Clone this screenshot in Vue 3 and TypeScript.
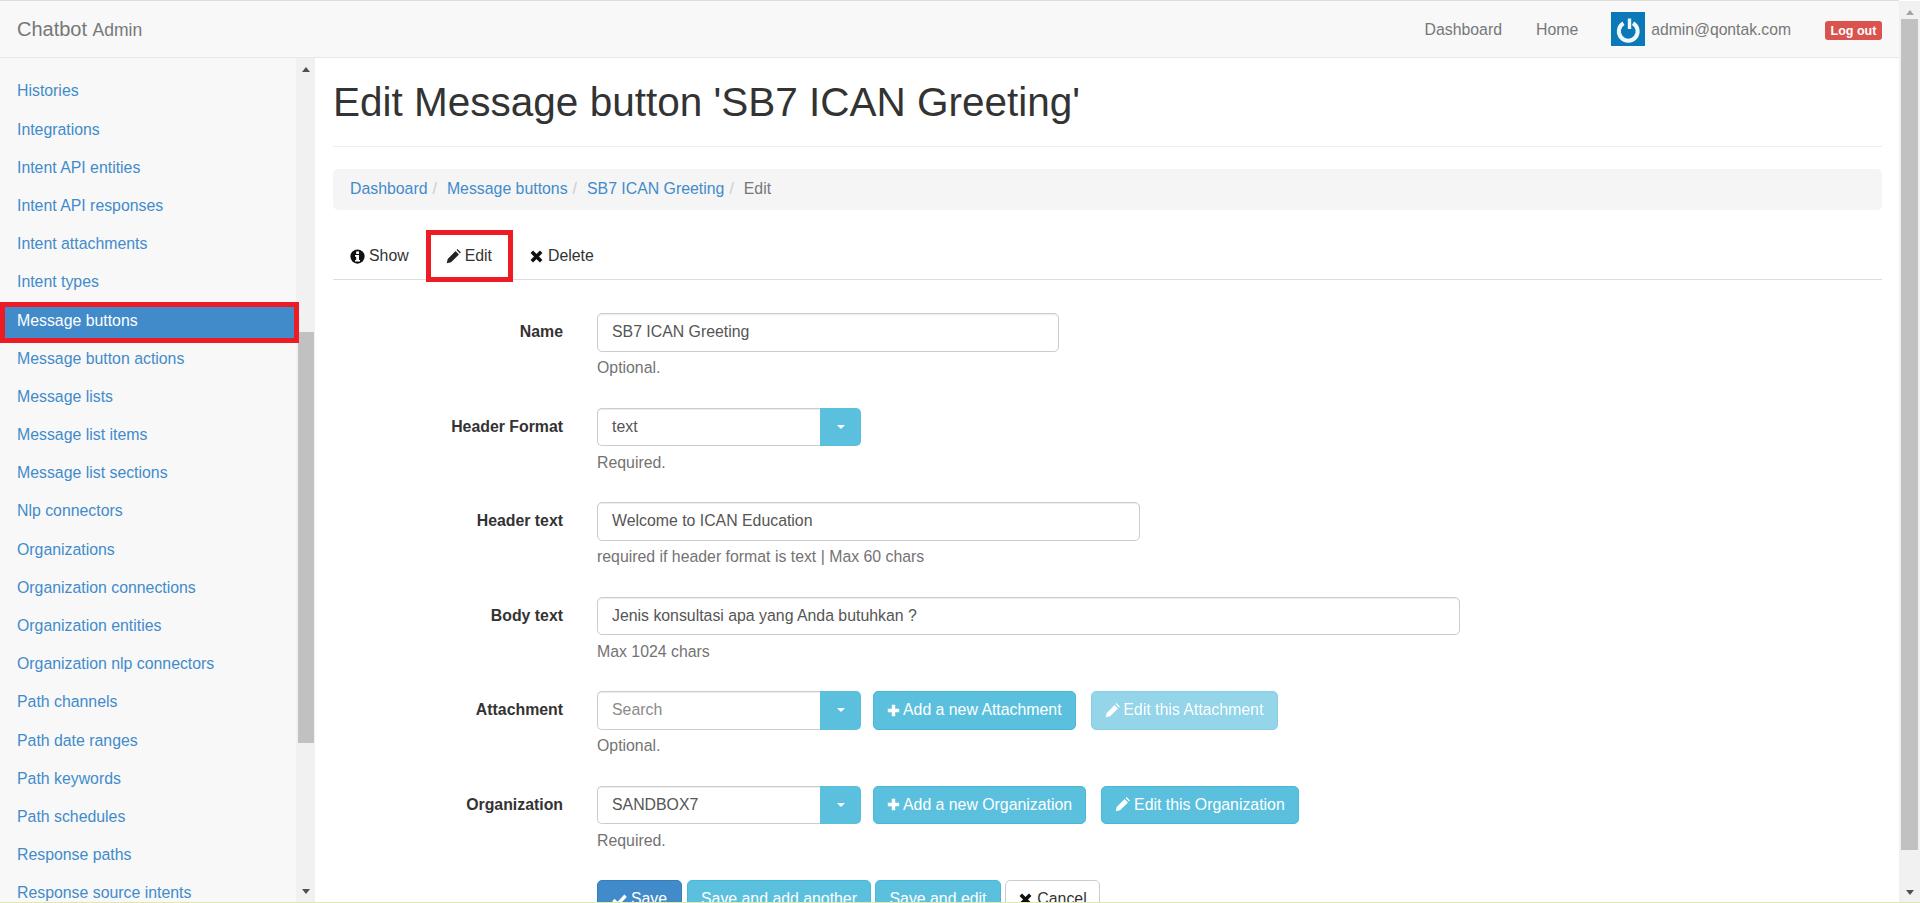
<script setup lang="ts">
const sideItems: string[] = [
  'Histories', 'Integrations', 'Intent API entities', 'Intent API responses', 'Intent attachments',
  'Intent types', 'Message buttons', 'Message button actions', 'Message lists', 'Message list items',
  'Message list sections', 'Nlp connectors', 'Organizations', 'Organization connections',
  'Organization entities', 'Organization nlp connectors', 'Path channels', 'Path date ranges',
  'Path keywords', 'Path schedules', 'Response paths', 'Response source intents',
]
</script>

<template>
  <div class="page">
    <header class="nav">
      <div class="brand">Chatbot <small>Admin</small></div>
      <div class="nav-right">
        <a class="nav-link dash">Dashboard</a>
        <a class="nav-link home">Home</a>
        <svg class="avatar" viewBox="0 0 34 34" aria-hidden="true">
          <rect width="34" height="34" fill="#0b78b8" />
          <path d="M12.5 11.2a9.4 9.4 0 1 0 9.5 0" fill="none" stroke="#eef6fa" stroke-width="4" />
          <path d="M18.5 6.5v10.5" stroke="#eef6fa" stroke-width="3.4" />
        </svg>
        <span class="email">admin@qontak.com</span>
        <span class="logout">Log out</span>
      </div>
    </header>

    <div class="body">
      <aside class="side">
        <ul class="side-list">
          <li v-for="item in sideItems" :key="item" class="side-item" :class="{ active: item === 'Message buttons' }">
            {{ item }}
          </li>
        </ul>
        <div class="scroll side-scroll">
          <i class="arr up"></i>
          <div class="thumb side-thumb"></div>
          <i class="arr down"></i>
        </div>
        <div class="mark side-mark"></div>
      </aside>

      <main class="main">
        <h1 class="title">Edit Message button 'SB7 ICAN Greeting'</h1>
        <hr class="rule" />
        <nav class="crumbs">
          <a>Dashboard</a><span class="sep">/</span>
          <a>Message buttons</a><span class="sep">/</span>
          <a>SB7 ICAN Greeting</a><span class="sep">/</span>
          <span class="cur">Edit</span>
        </nav>
        <div class="tabs">
          <span class="tab show">
            <svg class="ico" viewBox="0 0 16 16"><circle cx="8" cy="8" r="7.6" fill="#111" /><rect x="6.6" y="2.6" width="3" height="2.7" fill="#fff" /><path d="M5.4 6.5h4.2v5.2h1.1v1.7H5.4v-1.7h1.2V8.2H5.4z" fill="#fff" /></svg>Show
          </span>
          <span class="tab edit">
            <svg class="ico" viewBox="0 0 16 16"><path d="M0.8 15.2l1-4.6L10.2 2.2l3.6 3.6-8.4 8.4zM11.3 1.1l1-1 3.6 3.6-1 1z" fill="#222" /></svg>Edit
            <span class="mark tab-mark"></span>
          </span>
          <span class="tab del">
            <svg class="ico" viewBox="0 0 16 16"><path d="M3 3l10 10M13 3L3 13" stroke="#111" stroke-width="3.8" fill="none" /></svg>Delete
          </span>
        </div>

        <form class="form">
          <div class="row">
            <label>Name</label>
            <div class="ctl">
              <div class="input w-name">SB7 ICAN Greeting</div>
              <p class="help">Optional.</p>
            </div>
          </div>
          <div class="row">
            <label>Header Format</label>
            <div class="ctl">
              <div class="line">
                <div class="input combo">text</div><span class="caret-btn"><i></i></span>
              </div>
              <p class="help">Required.</p>
            </div>
          </div>
          <div class="row">
            <label>Header text</label>
            <div class="ctl">
              <div class="input w-head">Welcome to ICAN Education</div>
              <p class="help">required if header format is text | Max 60 chars</p>
            </div>
          </div>
          <div class="row">
            <label>Body text</label>
            <div class="ctl">
              <div class="input w-body">Jenis konsultasi apa yang Anda butuhkan ?</div>
              <p class="help">Max 1024 chars</p>
            </div>
          </div>
          <div class="row">
            <label>Attachment</label>
            <div class="ctl">
              <div class="line">
                <div class="input combo ph">Search</div><span class="caret-btn"><i></i></span>
                <span class="btn info add1"><svg class="ico plus" viewBox="0 0 16 16"><path d="M8 1v14M1 8h14" stroke="#fff" stroke-width="4.2" /></svg>Add a new Attachment</span>
                <span class="btn info off edit1"><svg class="ico" viewBox="0 0 16 16"><path d="M0.8 15.2l1-4.6L10.2 2.2l3.6 3.6-8.4 8.4zM11.3 1.1l1-1 3.6 3.6-1 1z" fill="#fff" /></svg>Edit this Attachment</span>
              </div>
              <p class="help">Optional.</p>
            </div>
          </div>
          <div class="row">
            <label>Organization</label>
            <div class="ctl">
              <div class="line">
                <div class="input combo">SANDBOX7</div><span class="caret-btn"><i></i></span>
                <span class="btn info add1"><svg class="ico plus" viewBox="0 0 16 16"><path d="M8 1v14M1 8h14" stroke="#fff" stroke-width="4.2" /></svg>Add a new Organization</span>
                <span class="btn info edit2"><svg class="ico" viewBox="0 0 16 16"><path d="M0.8 15.2l1-4.6L10.2 2.2l3.6 3.6-8.4 8.4zM11.3 1.1l1-1 3.6 3.6-1 1z" fill="#fff" /></svg>Edit this Organization</span>
              </div>
              <p class="help">Required.</p>
            </div>
          </div>
          <div class="actions">
            <span class="btn primary"><svg class="ico" viewBox="0 0 16 16"><path d="M1.5 8.5l4.5 4.5 8.5-9" stroke="#fff" stroke-width="3.6" fill="none" /></svg>Save</span>
            <span class="btn info a-add">Save and add another</span>
            <span class="btn info a-edit">Save and edit</span>
            <span class="btn plain"><svg class="ico" viewBox="0 0 16 16"><path d="M3 3l10 10M13 3L3 13" stroke="#111" stroke-width="3.8" fill="none" /></svg>Cancel</span>
          </div>
        </form>
      </main>

      <div class="scroll main-scroll">
        <i class="arr up"></i>
        <div class="thumb main-thumb"></div>
        <i class="arr down"></i>
      </div>
    </div>
    <div class="strip"></div>
  </div>
</template>

<style>
html, body { margin: 0; padding: 0; background: #fff; overflow: hidden; }
</style>

<style scoped>
.page {
  width: 1920px; height: 903px; overflow: hidden; position: relative;
  display: flex; flex-direction: column;
  font-family: "Liberation Sans", Arial, sans-serif; font-size: 15.85px; color: #333;
}
.nav {
  height: 58px; flex: none; box-sizing: border-box; margin-right: 21px;
  background: #f8f8f8; border-top: 1px solid #ddd; border-bottom: 1px solid #e7e7e7;
  display: flex; align-items: center; justify-content: space-between; padding: 0 17px;
  color: #777;
}
.brand { font-size: 20px; }
.brand small { font-size: 17.5px; }
.nav-right { display: flex; align-items: center; }
.nav-link { color: #777; margin-top: 1px; }
.home { margin-left: 34px; }
.avatar { width: 34px; height: 34px; margin-left: 33px; filter: blur(0.4px); }
.email { margin-left: 6px; color: #777; margin-top: 1px; font-size: 15.7px; }
.logout {
  margin-left: 34px; background: #d9534f; color: #fff; font-weight: 700;
  font-size: 12.5px; border-radius: 3px; height: 19px; width: 57px;
  display: flex; align-items: center; justify-content: center; margin-top: 3px;
}
.body { flex: 1; display: flex; min-height: 0; }
.side {
  width: 315px; flex: none; display: flex; position: relative; overflow: hidden; background: #f8f8f8;
}
.side-list {
  list-style: none; margin: 0; padding: 14.4px 0 0; width: 296px; flex: none;
}
.side-item {
  height: 38.2px; line-height: 38.2px; padding-left: 17px; color: #428bca; white-space: nowrap;
}
.side-item.active { background: #428bca; color: #fff; }
.scroll { background: #f1f1f1; display: flex; flex-direction: column; align-items: center; position: relative; flex: none; }
.side-scroll { width: 19px; height: 100%; }
.main-scroll { width: 21px; height: 903px; margin-top: -57px; }
.thumb { background: #c1c1c1; flex: none; }
.side-thumb { width: 16px; height: 411px; margin-top: 260px; }
.main-thumb { width: 17px; height: 831px; margin-top: 4px; }
.arr { display: block; width: 0; height: 0; border-left: 4.5px solid transparent; border-right: 4.5px solid transparent; flex: none; }
.arr.up { border-bottom: 5px solid #505050; margin-top: 9px; }
.arr.down { border-top: 5px solid #505050; margin-top: auto; margin-bottom: 9px; }
.main-scroll .arr.up { border-bottom-color: #a3a3a3; }
.mark { position: absolute; border: 5px solid #ed1c24; box-sizing: border-box; pointer-events: none; }
.side-mark { left: 0; top: 244px; width: 299px; height: 41px; }
.main { flex: 1; min-width: 0; padding: 0 17px 0 18px; overflow: hidden; }
.title { font-size: 40.5px; font-weight: 400; line-height: 45px; margin: 22px 0 0; color: #333; white-space: nowrap; }
.rule { border: 0; border-top: 1px solid #eee; margin: 21px 0 0; }
.crumbs {
  margin-top: 22px; height: 41px; background: #f5f5f5; border-radius: 5px; padding: 0 17px 2px;
  box-sizing: border-box; display: flex; align-items: center;
}
.crumbs a { color: #428bca; }
.sep { color: #ccc; padding: 0 6px 0 5px; margin-right: 4px; }
.cur { color: #777; }
.tabs { margin-top: 21px; height: 49px; box-sizing: border-box; border-bottom: 1px solid #ddd; display: flex; padding-left: 17px; }
.tab { display: flex; align-items: center; position: relative; height: 48px; padding-top: 2px; box-sizing: border-box; color: #333; }
.tab.edit { margin-left: 37px; }
.tab.del { margin-left: 37px; }
.ico { width: 15px; height: 15px; margin-right: 4px; flex: none; }
.tab-mark { left: -20px; top: -1px; width: 87px; height: 52px; }
.form { margin-top: 33px; }
.row { display: flex; height: 94.5px; }
.row label { width: 230px; text-align: right; font-weight: 700; line-height: 37px; flex: none; color: #333; }
.ctl { margin-left: 34px; flex: 1; min-width: 0; }
.input {
  box-sizing: border-box; height: 38.5px; line-height: 36px; border: 1px solid #ccc; border-radius: 5px;
  padding: 0 14px; background: #fff; color: #555; box-shadow: inset 0 1px 1px rgba(0,0,0,.075); white-space: nowrap;
}
.w-name { width: 462px; }
.w-head { width: 543px; }
.w-body { width: 863px; }
.line { display: flex; }
.combo { width: 223px; border-radius: 5px 0 0 5px; border-right: 0; }
.ph { color: #8a8a8a; }
.caret-btn {
  width: 41px; height: 38.5px; background: #5bc0de; border-radius: 0 5px 5px 0; display: flex; align-items: center; justify-content: center; flex: none;
}
.caret-btn i { width: 0; height: 0; border-left: 4.5px solid transparent; border-right: 4.5px solid transparent; border-top: 4.5px solid #fff; display: block; }
.help { margin: 5.5px 0 0; color: #737373; line-height: 22px; }
.btn {
  box-sizing: border-box; height: 38.5px; display: inline-flex; align-items: center; justify-content: center;
  border-radius: 5px; color: #fff; white-space: nowrap; border: 1px solid transparent;
}
.btn .ico { margin-right: 4px; }
.btn .plus { width: 13px; height: 13px; margin-right: 3px; }
.info { background: #5bc0de; border-color: #46b8da; }
.add1 { margin-left: 12px; padding: 0 13px; }
.off { opacity: .65; }
.edit1 { margin-left: 15px; padding: 0 13px; }
.edit2 { margin-left: 15px; padding: 0 13px; }
.actions { margin-left: 264px; display: flex; gap: 5px; }
.actions .btn { padding: 0 13px; }
.actions .primary { width: 85px; padding: 0; }
.actions .a-add { width: 184px; padding: 0; margin-left: 0; }
.actions .a-edit { width: 126px; padding: 0; margin-left: -1px; }
.actions .plain { width: 95px; padding: 0; margin-left: -1px; }
.primary { background: #428bca; border-color: #357ebd; }
.plain { background: #fff; border-color: #ccc; color: #333; }
.strip { position: absolute; left: 0; right: 0; bottom: 0; height: 1px; background: #dfe8ad; }
</style>
